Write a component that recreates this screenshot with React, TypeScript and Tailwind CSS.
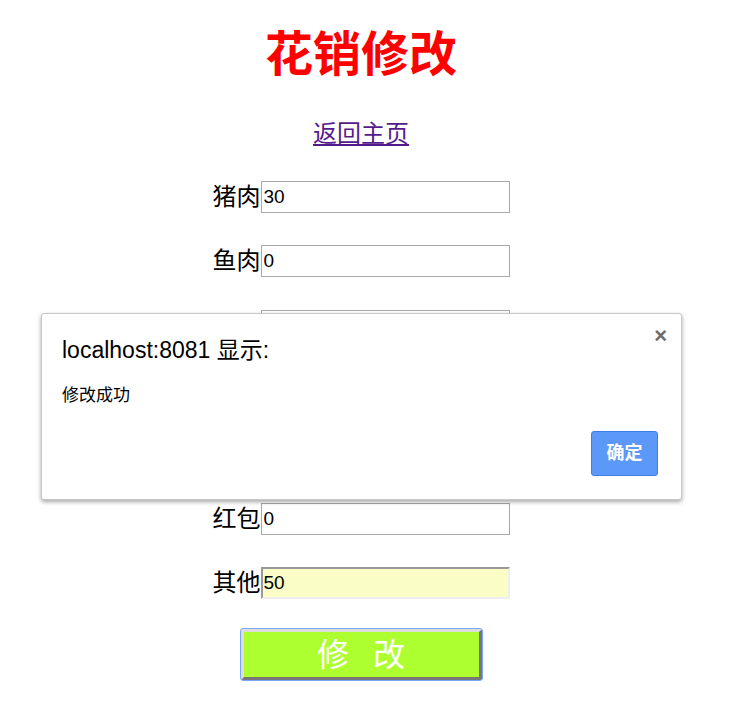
import React from 'react';

const rows: { label: string; value: string }[] = [
  { label: '猪肉', value: '30' },
  { label: '鱼肉', value: '0' },
  { label: '蔬菜', value: '0' },
  { label: '水果', value: '0' },
  { label: '零食', value: '0' },
  { label: '红包', value: '0' },
];

const font = { fontFamily: '"Liberation Sans", "Noto Sans CJK SC", sans-serif' };

export default function App() {
  return (
    <div className="relative w-[729px] h-[716px] bg-white overflow-hidden text-black" style={font}>
      <div className="w-[722px] flex flex-col items-center">
        {/* Title */}
        <h1 className="mt-[31px] h-[48px] leading-[48px] text-[48px] font-bold text-[#ff0000]">花销修改</h1>

        {/* Back link */}
        <a href="#" className="mt-[43px] h-[24px] leading-[24px] text-[24px] text-[#551a8b] underline">
          返回主页
        </a>

        {/* Form rows */}
        <div className="mt-[35px] flex flex-col gap-[32.4px]">
          {rows.map((r) => (
            <div key={r.label} className="flex items-center h-[32px]">
              <span className="text-[24px] leading-[32px]">{r.label}</span>
              <input
                defaultValue={r.value}
                className="w-[249px] h-[32px] border border-[#a9a9a9] bg-white px-[2px] text-[19px] outline-none"
              />
            </div>
          ))}
          <div className="flex items-center h-[32px]">
            <span className="text-[24px] leading-[32px]">其他</span>
            <input
              defaultValue="50"
              className="w-[249px] h-[32px] border-2 border-t-[#999999] border-l-[#999999] border-b-[#eeeeee] border-r-[#eeeeee] bg-[#fafdc5] px-[1px] text-[19px] outline-none"
            />
          </div>
        </div>

        {/* Submit */}
        <button className="mt-[30px] w-[241px] h-[51px] bg-[#adff2f] border-[3px] border-t-[#dddddd] border-l-[#dddddd] border-b-[#777777] border-r-[#777777] outline outline-1 outline-[#7aa6f5] rounded-[2px] flex items-center justify-center gap-[24px] text-[32px] text-white">
          <span>修</span>
          <span>改</span>
        </button>
      </div>

      {/* Alert dialog */}
      <div className="absolute left-[41px] top-[313px] w-[641px] h-[187px] bg-white border border-[#c8c8c8] rounded-[3px] shadow-[0_2px_4px_rgba(0,0,0,0.35)]">
        <div className="absolute right-[14px] top-[11px] text-[#6b6b6b] text-[22px] font-bold leading-none">×</div>
        <div className="pl-[20px] pt-[21px] text-[23px] leading-[30px]">localhost:8081 显示:</div>
        <div className="pl-[20px] mt-[20px] text-[17px] leading-[22px]">修改成功</div>
        <button className="absolute right-[23px] bottom-[23px] w-[67px] h-[45px] bg-[#5c98f7] border border-[#3f7de6] rounded-[3px] text-white text-[18px] font-bold">
          确定
        </button>
      </div>
    </div>
  );
}
